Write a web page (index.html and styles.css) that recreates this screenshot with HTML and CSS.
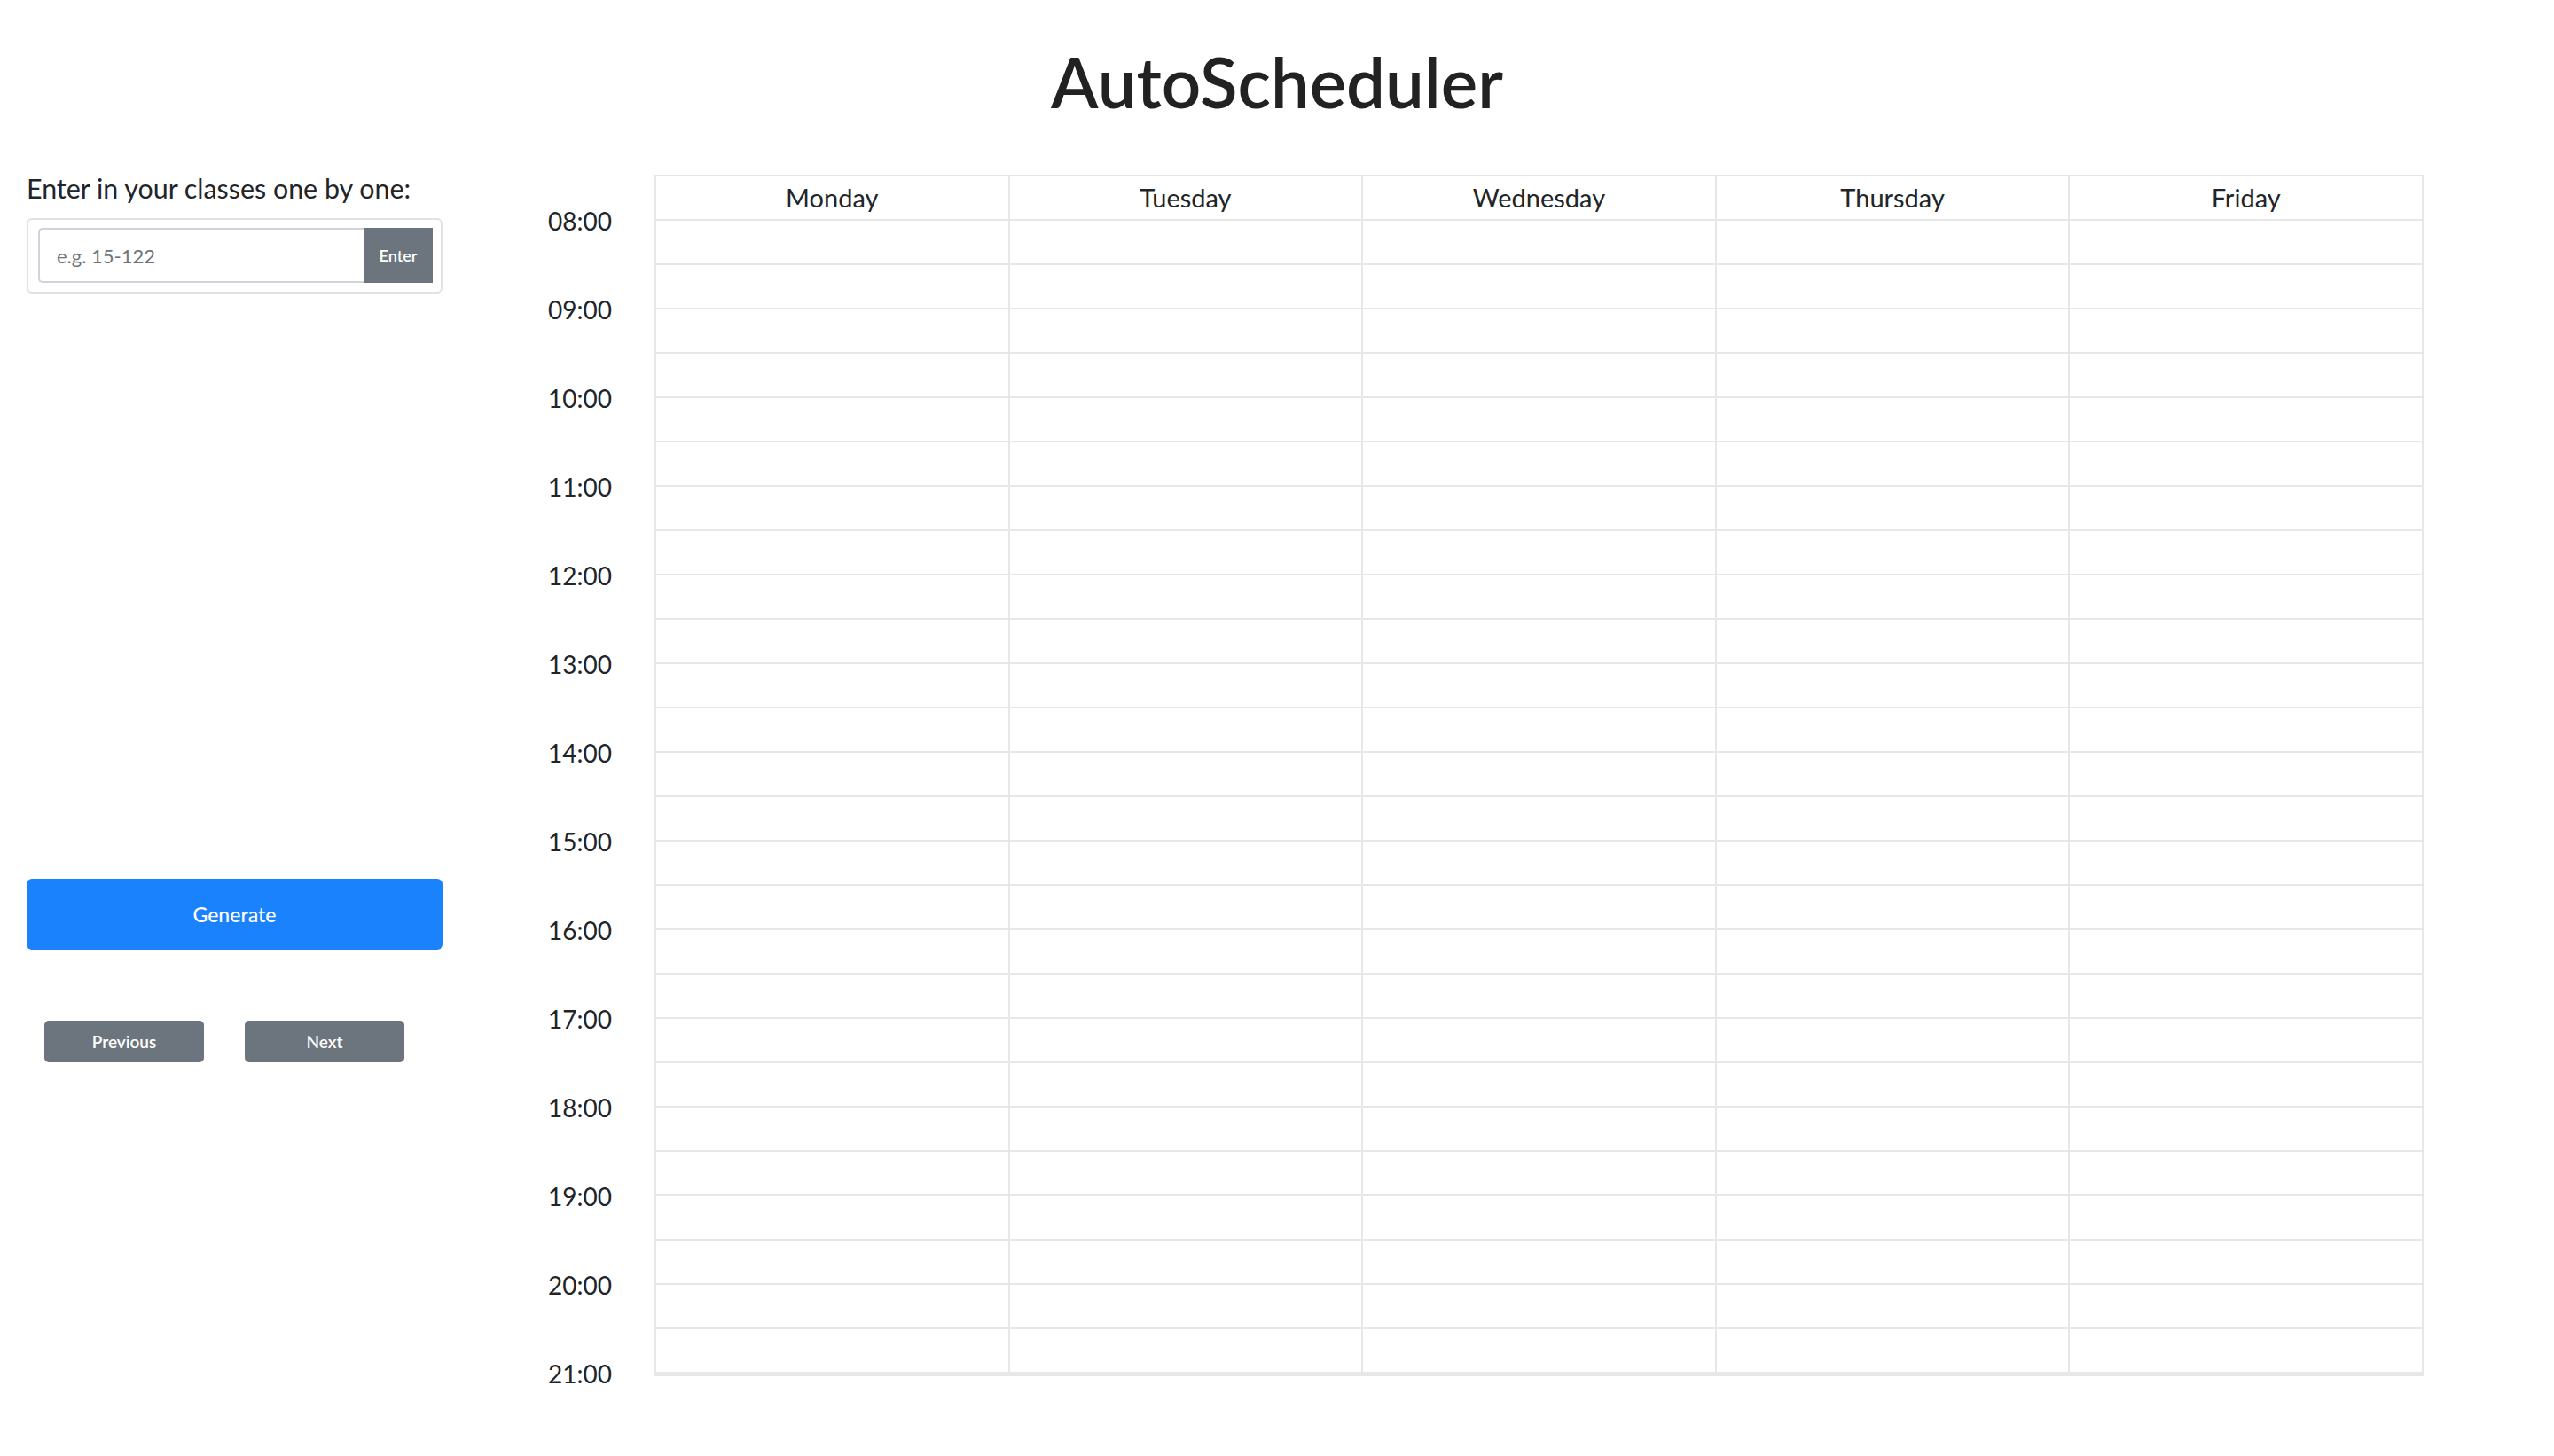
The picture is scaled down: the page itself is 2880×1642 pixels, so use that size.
FILE: index.html
```html
<!DOCTYPE html>
<html lang="en">
<head>
<meta charset="utf-8">
<title>AutoScheduler</title>
<link rel="stylesheet" href="styles.css">
</head>
<body>
<h1 class="title">AutoScheduler</h1>
<div class="layout">
  <aside class="sidebar">
    <p class="prompt">Enter in your classes one by one:</p>
    <div class="entry-card">
      <div class="input-group">
        <input class="course-input" type="text" placeholder="e.g. 15-122">
        <button class="btn btn-enter">Enter</button>
      </div>
    </div>
    <button class="btn btn-generate">Generate</button>
    <div class="pager">
      <button class="btn btn-page">Previous</button>
      <button class="btn btn-page">Next</button>
    </div>
  </aside>
  <section class="calendar">
    <div class="times">
      <div class="time">08:00</div>
      <div class="time">09:00</div>
      <div class="time">10:00</div>
      <div class="time">11:00</div>
      <div class="time">12:00</div>
      <div class="time">13:00</div>
      <div class="time">14:00</div>
      <div class="time">15:00</div>
      <div class="time">16:00</div>
      <div class="time">17:00</div>
      <div class="time">18:00</div>
      <div class="time">19:00</div>
      <div class="time">20:00</div>
      <div class="time">21:00</div>
    </div>
    <div class="week">
      <div class="day">Monday</div><div class="day">Tuesday</div><div class="day">Wednesday</div><div class="day">Thursday</div><div class="day">Friday</div>
      <div class="slot"></div><div class="slot"></div><div class="slot"></div><div class="slot"></div><div class="slot"></div>
      <div class="slot"></div><div class="slot"></div><div class="slot"></div><div class="slot"></div><div class="slot"></div>
      <div class="slot"></div><div class="slot"></div><div class="slot"></div><div class="slot"></div><div class="slot"></div>
      <div class="slot"></div><div class="slot"></div><div class="slot"></div><div class="slot"></div><div class="slot"></div>
      <div class="slot"></div><div class="slot"></div><div class="slot"></div><div class="slot"></div><div class="slot"></div>
      <div class="slot"></div><div class="slot"></div><div class="slot"></div><div class="slot"></div><div class="slot"></div>
      <div class="slot"></div><div class="slot"></div><div class="slot"></div><div class="slot"></div><div class="slot"></div>
      <div class="slot"></div><div class="slot"></div><div class="slot"></div><div class="slot"></div><div class="slot"></div>
      <div class="slot"></div><div class="slot"></div><div class="slot"></div><div class="slot"></div><div class="slot"></div>
      <div class="slot"></div><div class="slot"></div><div class="slot"></div><div class="slot"></div><div class="slot"></div>
      <div class="slot"></div><div class="slot"></div><div class="slot"></div><div class="slot"></div><div class="slot"></div>
      <div class="slot"></div><div class="slot"></div><div class="slot"></div><div class="slot"></div><div class="slot"></div>
      <div class="slot"></div><div class="slot"></div><div class="slot"></div><div class="slot"></div><div class="slot"></div>
      <div class="slot"></div><div class="slot"></div><div class="slot"></div><div class="slot"></div><div class="slot"></div>
      <div class="slot"></div><div class="slot"></div><div class="slot"></div><div class="slot"></div><div class="slot"></div>
      <div class="slot"></div><div class="slot"></div><div class="slot"></div><div class="slot"></div><div class="slot"></div>
      <div class="slot"></div><div class="slot"></div><div class="slot"></div><div class="slot"></div><div class="slot"></div>
      <div class="slot"></div><div class="slot"></div><div class="slot"></div><div class="slot"></div><div class="slot"></div>
      <div class="slot"></div><div class="slot"></div><div class="slot"></div><div class="slot"></div><div class="slot"></div>
      <div class="slot"></div><div class="slot"></div><div class="slot"></div><div class="slot"></div><div class="slot"></div>
      <div class="slot"></div><div class="slot"></div><div class="slot"></div><div class="slot"></div><div class="slot"></div>
      <div class="slot"></div><div class="slot"></div><div class="slot"></div><div class="slot"></div><div class="slot"></div>
      <div class="slot"></div><div class="slot"></div><div class="slot"></div><div class="slot"></div><div class="slot"></div>
      <div class="slot"></div><div class="slot"></div><div class="slot"></div><div class="slot"></div><div class="slot"></div>
      <div class="slot"></div><div class="slot"></div><div class="slot"></div><div class="slot"></div><div class="slot"></div>
      <div class="slot"></div><div class="slot"></div><div class="slot"></div><div class="slot"></div><div class="slot"></div>
      <div class="slot end"></div><div class="slot end"></div><div class="slot end"></div><div class="slot end"></div><div class="slot end"></div>
    </div>
  </section>
</div>
</body>
</html>
```
FILE: styles.css
```css
* { box-sizing: border-box; }

html, body {
  margin: 0;
  padding: 0;
  background: #ffffff;
}

body {
  font-family: Lato, "Noto Sans", sans-serif;
  color: #212529;
  width: 2880px;
  height: 1642px;
  overflow: hidden;
}

.title {
  margin: 44px 0 0 0;
  font-size: 78px;
  line-height: 96px;
  font-weight: 600;
  text-align: center;
  color: #222222;
}

.layout {
  display: flex;
  align-items: flex-start;
  margin-top: 52px;
  padding-left: 30px;
}

.sidebar {
  width: 469px;
  display: flex;
  flex-direction: column;
}

.prompt {
  margin: 2px 0 0 0;
  font-size: 30.4px;
  line-height: 36px;
  white-space: nowrap;
}

.entry-card {
  margin-top: 16px;
  border: 2px solid #e2e2e2;
  border-radius: 6px;
  padding: 9px 9px 10px 11px;
}

.input-group {
  display: flex;
  height: 62px;
}

.course-input {
  flex: 1;
  min-width: 0;
  height: 62px;
  border: 2px solid #ced4da;
  border-right: none;
  border-radius: 5px 0 0 5px;
  padding: 0 0 0 19px;
  font-family: Lato, "Noto Sans", sans-serif;
  font-size: 22px;
  color: #495057;
  outline: none;
}

.course-input::placeholder {
  color: #6c757d;
}

.btn {
  font-family: Lato, "Noto Sans", sans-serif;
  color: #ffffff;
  border: none;
  cursor: pointer;
  padding: 0;
}

.btn-enter {
  width: 78px;
  height: 62px;
  background: #6c757d;
  font-size: 18px;
  font-weight: 600;
}

.btn-generate {
  margin-top: 660px;
  width: 469px;
  height: 80px;
  background: #1982fc;
  border-radius: 6px;
  font-size: 23px;
  font-weight: 500;
}

.pager {
  display: flex;
  gap: 46px;
  margin-top: 80px;
  padding-left: 20px;
}

.btn-page {
  width: 180px;
  height: 47px;
  background: #6c757d;
  border-radius: 5px;
  font-size: 19px;
  font-weight: 600;
}

.calendar {
  display: flex;
  align-items: flex-start;
  margin-left: 119px;
  padding-top: 5px;
}

.times {
  width: 120px;
  display: flex;
  flex-direction: column;
  padding-top: 2px;
}

.time {
  height: 100px;
  font-size: 28px;
  line-height: 100px;
}

.week {
  width: 1995px;
  display: grid;
  grid-template-columns: repeat(5, 1fr);
  align-content: start;
  border-left: 2px solid #e7e7e7;
  border-top: 2px solid #e7e7e7;
}

.day,
.slot {
  border-right: 2px solid #e7e7e7;
  border-bottom: 2px solid #e7e7e7;
}

.day {
  height: 50px;
  font-size: 29px;
  line-height: 44px;
  padding-top: 2px;
  padding-bottom: 2px;
  text-align: center;
}

.slot {
  height: 50px;
}

.slot.end {
  height: 3px;
}
```
